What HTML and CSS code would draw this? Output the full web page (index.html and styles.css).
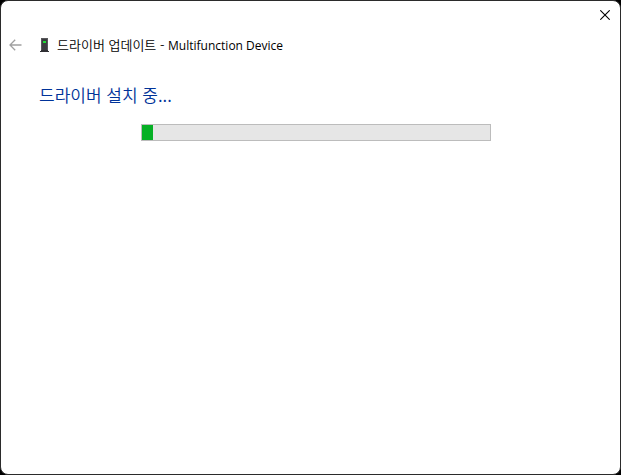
FILE: index.html
```html
<!DOCTYPE html>
<html lang="ko">
<head>
    <meta charset="UTF-8">
    <meta name="viewport" content="width=device-width, initial-scale=1.0">
    <title>드라이버 업데이트</title>
    <link rel="stylesheet" href="styles.css">
</head>
<body>

    <div class="window">
        <div class="title-bar">
            <button type="button" class="close" aria-label="닫기">
                <svg width="10" height="10" viewBox="0 0 10 10"><path d="M0.3 0.3L9.7 9.7M9.7 0.3L0.3 9.7" stroke="#000" stroke-width="1.1"/></svg>
            </button>
        </div>

        <header class="header">
            <button type="button" class="back" aria-label="뒤로" disabled>
                <svg width="13" height="12" viewBox="0 0 13 12"><path d="M12.5 6H1M6.2 0.8L1 6l5.2 5.2" fill="none" stroke="#a0a0a0" stroke-width="1.3"/></svg>
            </button>
            <svg class="device-icon" width="9" height="16" viewBox="0 0 9 16">
                <path d="M1 1h7v12H1z" fill="#3c3c40"/>
                <path d="M1 1h7v1H1zM1 2h1v11H1zM7 2h1v11H7z" fill="#58585b"/>
                <path d="M3 4h3v2H3z" fill="#1edc32"/>
                <path d="M1 13h7v1h1v1H0v-1h1z" fill="#303034"/>
            </svg>
            <span class="device-name">드라이버 업데이트 - <span lang="en">Multifunction Device</span></span>
        </header>

        <main class="content">
            <h1 id="status">드라이버 설치 중...</h1>
            <div class="progress" role="progressbar" aria-labelledby="status" aria-valuemin="0" aria-valuemax="100" aria-valuenow="3">
                <div class="progress-fill" style="width: 3.4%"></div>
            </div>
        </main>
    </div>

</body>
</html>
```

FILE: styles.css
```css
* {
    box-sizing: border-box;
}

body {
    font-family: "Noto Sans CJK KR", sans-serif;
    font-size: 13px;
    background-color: #000000;
    color: #000000;
    margin: 0;
}

button {
    display: flex;
    align-items: center;
    justify-content: center;
    background: none;
    border: none;
    padding: 0;
}

.window {
    min-height: 100vh;
    background-color: #ffffff;
    border: 1px solid #2b2b2b;
    border-radius: 8px;
}

.title-bar {
    display: flex;
    justify-content: flex-end;
    height: 28px;
}

.close {
    width: 30px;
    height: 28px;
}

.header {
    display: flex;
    align-items: center;
    height: 32px;
    padding-left: 8px;
}

.back {
    width: 13px;
    height: 16px;
    margin-right: 18px;
}

.device-name {
    margin-left: 8px;
    line-height: 18px;
    font-weight: 350;
    white-space: nowrap;
}

.device-name span {
    font-family: "Open Sans", sans-serif;
    font-size: 12px;
    font-weight: normal;
}

.content {
    padding: 22px 28px 22px 38px;
}

h1 {
    margin: 0 0 17px;
    color: #003399;
    font-size: 17px;
    font-weight: 350;
    line-height: 24px;
}

/* Progress bar */
.progress {
    width: 350px;
    max-width: 100%;
    height: 17px;
    margin: 0 auto;
    background-color: #e6e6e6;
    border: 1px solid #bcbcbc;
}

.progress-fill {
    height: 100%;
    background-color: #06b025;
}
```
